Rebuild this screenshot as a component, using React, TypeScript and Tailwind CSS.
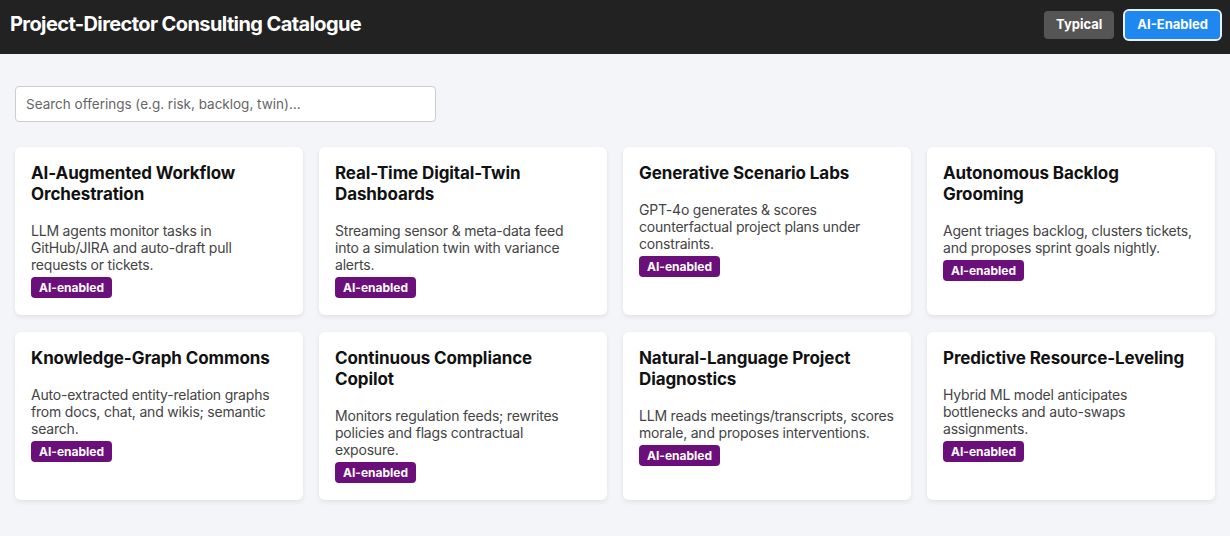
import React, { useState } from 'react';

interface Offering {
  title: string;
  description: string;
}

const offerings: Offering[] = [
  {
    title: 'AI-Augmented Workflow Orchestration',
    description: 'LLM agents monitor tasks in GitHub/JIRA and auto-draft pull requests or tickets.',
  },
  {
    title: 'Real-Time Digital-Twin Dashboards',
    description: 'Streaming sensor & meta-data feed into a simulation twin with variance alerts.',
  },
  {
    title: 'Generative Scenario Labs',
    description: 'GPT-4o generates & scores counterfactual project plans under constraints.',
  },
  {
    title: 'Autonomous Backlog Grooming',
    description: 'Agent triages backlog, clusters tickets, and proposes sprint goals nightly.',
  },
  {
    title: 'Knowledge-Graph Commons',
    description: 'Auto-extracted entity-relation graphs from docs, chat, and wikis; semantic search.',
  },
  {
    title: 'Continuous Compliance Copilot',
    description: 'Monitors regulation feeds; rewrites policies and flags contractual\nexposure.',
  },
  {
    title: 'Natural-Language Project Diagnostics',
    description: 'LLM reads meetings/transcripts, scores morale, and proposes interventions.',
  },
  {
    title: 'Predictive Resource-Leveling',
    description: 'Hybrid ML model anticipates bottlenecks and auto-swaps assignments.',
  },
];

export default function App() {
  const [mode, setMode] = useState<'typical' | 'ai'>('ai');
  const [query, setQuery] = useState('');

  const visible = offerings.filter((o) =>
    (o.title + ' ' + o.description).toLowerCase().includes(query.toLowerCase())
  );

  return (
    <div className="min-h-[536px] bg-[#f4f5f9] font-['Inter','Liberation_Sans',sans-serif]">
      {/* Barre du haut */}
      <header className="h-[54px] bg-[#222222] px-[10px] pb-[6px] flex items-center justify-between">
        <h1 className="text-[20px] font-bold text-white tracking-[-0.6px]">
          Project-Director Consulting Catalogue
        </h1>
        <div className="flex items-center gap-[11px] mt-[2px]">
          <button
            type="button"
            onClick={() => setMode('typical')}
            className={`h-[28px] px-[12px] rounded-[4px] text-[13px] font-bold text-white ${
              mode === 'typical' ? 'bg-[#1e88f0] outline-2 outline-[#e6f0ff]' : 'bg-[#555555]'
            }`}
          >
            Typical
          </button>
          <button
            type="button"
            onClick={() => setMode('ai')}
            className={`h-[28px] px-[12px] rounded-[4px] text-[13px] font-bold text-white ${
              mode === 'ai' ? 'bg-[#1e88f0] outline-2 outline-[#e6f0ff]' : 'bg-[#555555]'
            }`}
          >
            AI-Enabled
          </button>
        </div>
      </header>

      <main className="px-[15px] pt-[32px] pb-[20px]">
        {/* Recherche */}
        <input
          type="text"
          value={query}
          onChange={(e) => setQuery(e.target.value)}
          placeholder="Search offerings (e.g. risk, backlog, twin)…"
          className="w-[421px] h-[36px] px-[10px] rounded-[4px] border border-[#cccccc] bg-white text-[13.5px] text-[#222] placeholder:text-[#666666] outline-none"
        />

        {/* Grille des offres */}
        <div className="mt-[25px] grid grid-cols-4 gap-x-[16px] gap-y-[17px]">
          {visible.map((o) => (
            <div
              key={o.title}
              className="bg-white rounded-[6px] p-[16px] shadow-[0_2px_5px_rgba(0,0,0,0.08)] min-h-[168px]"
            >
              <h3 className="text-[17px] leading-[21px] font-bold text-[#111111] tracking-[-0.1px]">
                {o.title}
              </h3>
              <p className="mt-[17px] pr-[0.5px] whitespace-pre-line text-[14px] leading-[17px] text-[#444444] tracking-[-0.2px]">
                {o.description}
              </p>
              {mode === 'ai' && (
                <span className="inline-block mt-[4px] h-[21px] px-[8px] rounded-[4px] bg-[#6b0f7a] text-white text-[12px] leading-[21px] font-bold">
                  AI-enabled
                </span>
              )}
            </div>
          ))}
        </div>
      </main>
    </div>
  );
}
